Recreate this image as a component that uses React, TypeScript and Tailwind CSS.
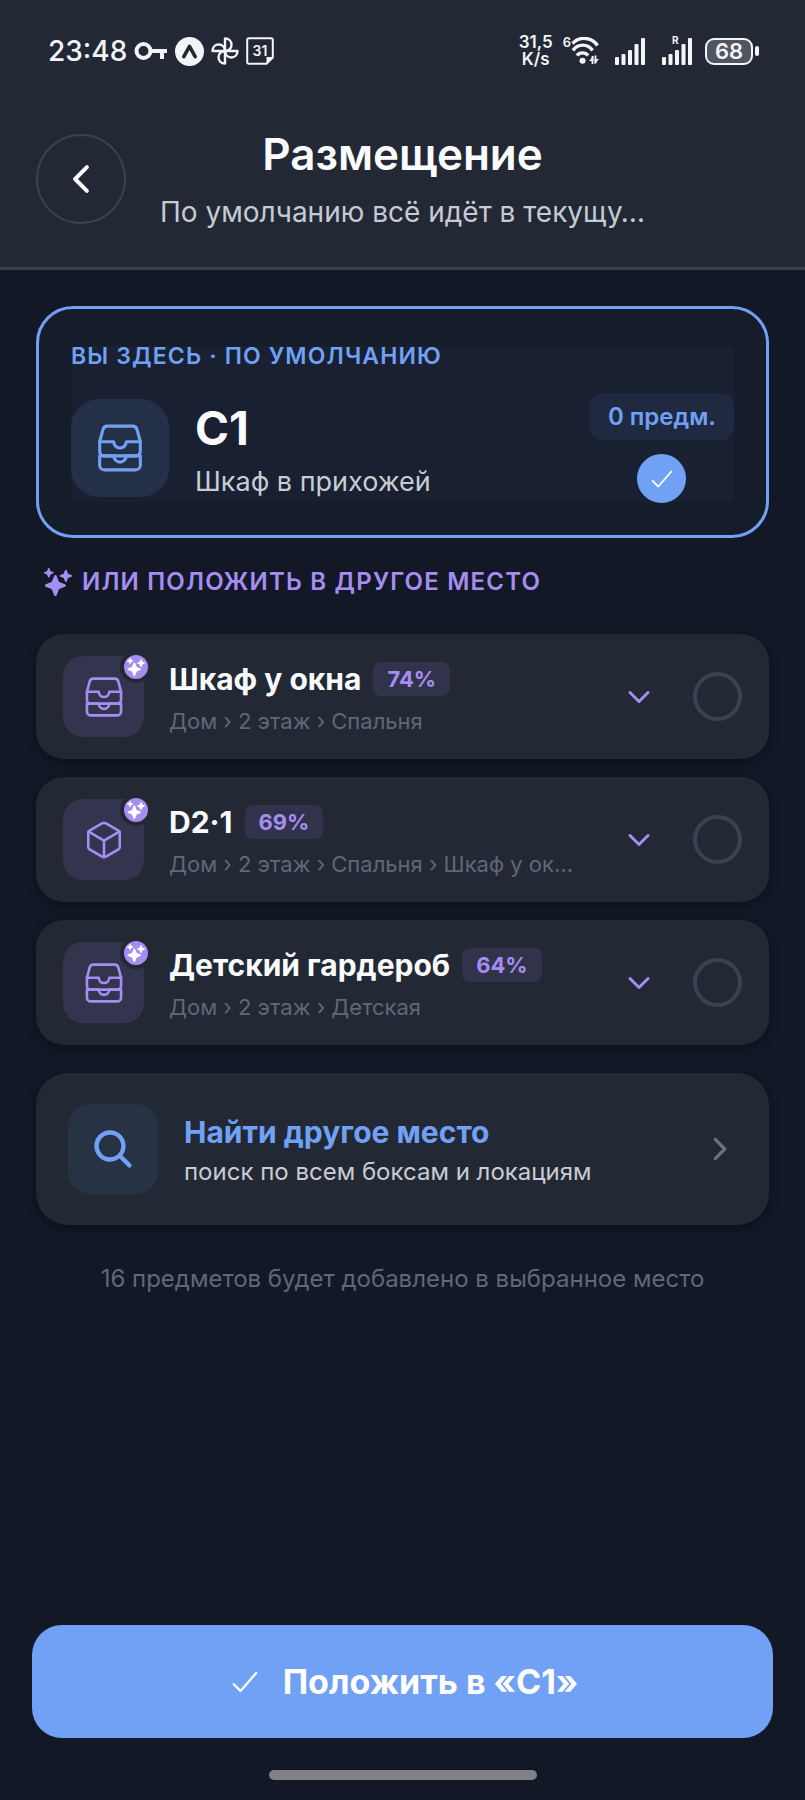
import { useState } from "react";
import type { ComponentType } from "react";
import {
  IoCheckmarkOutline,
  IoChevronBack,
  IoChevronDown,
  IoChevronForward,
  IoCubeOutline,
  IoFileTrayStackedOutline,
  IoSearch,
  IoSparkles,
} from "react-icons/io5";

type Place = {
  id: string;
  name: string;
  path: string;
  match: string;
  icon: ComponentType<{ className?: string }>;
};

const places: Place[] = [
  { id: "window", name: "Шкаф у окна", path: "Дом › 2 этаж › Спальня", match: "74%", icon: IoFileTrayStackedOutline },
  { id: "d2-1", name: "D2·1", path: "Дом › 2 этаж › Спальня › Шкаф у ок…", match: "69%", icon: IoCubeOutline },
  { id: "kids", name: "Детский гардероб", path: "Дом › 2 этаж › Детская", match: "64%", icon: IoFileTrayStackedOutline },
];

const SignalBars = () => (
  <svg viewBox="0 0 31 27" className="w-[31px] h-[27px]" fill="currentColor">
    <rect x="0" y="19" width="4" height="8" rx="1" />
    <rect x="6.5" y="16" width="4" height="11" rx="1" />
    <rect x="13" y="12" width="4" height="15" rx="1" />
    <rect x="19.5" y="6" width="4" height="21" rx="1" />
    <rect x="26" y="0" width="4" height="27" rx="1" />
  </svg>
);

const StatusBar = () => (
  <div className="flex items-center justify-between h-[102px] pl-12 pr-[46px] text-[#f3f4f7]">
    <div className="flex items-center gap-[7px]">
      <span className="text-[28px] leading-9 font-medium">23:48</span>
      <svg viewBox="0 0 34 20" className="w-[34px] h-5" fill="none" stroke="currentColor" strokeWidth="4">
        <circle cx="9.5" cy="10" r="7" />
        <path d="M16 10h17M28 10v8" />
      </svg>
      <svg viewBox="0 0 29 29" className="w-[29px] h-[29px]">
        <circle cx="14.5" cy="14.5" r="14.5" fill="currentColor" />
        <path
          d="M8.8 19.6 14.5 9.4l5.7 10.2"
          fill="none"
          stroke="#222935"
          strokeWidth="3.6"
          strokeLinecap="round"
          strokeLinejoin="round"
        />
      </svg>
      {/* four-blade pinwheel, one blade turned by quarters */}
      <svg viewBox="0 0 28 28" className="w-7 h-7" fill="none" stroke="currentColor" strokeWidth="2.4" strokeLinejoin="round">
        {[0, 90, 180, 270].map((angle) => (
          <path key={angle} d="M14 14V1.5c4 0 6.5 2.8 6.500 6.200S18 14 14 14" transform={`rotate(${angle} 14 14)`} />
        ))}
      </svg>
      <svg viewBox="0 0 28 28" className="w-7 h-7">
        <path
          d="M3 1.2h22a1.8 1.8 0 0 1 1.8 1.8v17.5l-6.3 6.3H3A1.8 1.8 0 0 1 1.2 25V3A1.8 1.8 0 0 1 3 1.2Z"
          fill="none"
          stroke="currentColor"
          strokeWidth="2"
        />
        <path d="M26.8 20h-6.3v6.8Z" fill="currentColor" />
        <text x="14" y="19" textAnchor="middle" fontSize="14" fontWeight="600" fill="currentColor">
          31
        </text>
      </svg>
    </div>

    <div className="flex items-center">
      <div className="flex flex-col items-center text-[17px] leading-[17px] font-semibold">
        <span>31,5</span>
        <span>K/s</span>
      </div>
      <span className="self-start ml-2.5 text-[13px] leading-4 font-semibold">6</span>
      <svg viewBox="0 0 28 28" className="w-7 h-7 mr-4" fill="none" stroke="currentColor" strokeWidth="3.4">
        <path d="M1.5 6.5a16 16 0 0 1 25 2" />
        <path d="M2 13.5a11.5 11.5 0 0 1 19.5 0" />
        <path d="M6 18.5a7 7 0 0 1 11 0" />
        <circle cx="11.5" cy="23.8" r="3" fill="currentColor" stroke="none" />
        <path d="M21.5 19v8M24.5 18.5v8" strokeWidth="1.8" />
        <path d="M22.4 19v5h-4.4ZM23.6 27v-5h4.4Z" fill="currentColor" stroke="none" />
      </svg>
      <SignalBars />
      <div className="relative ml-4 mr-3">
        <span className="absolute left-2.5 -top-1 text-[10px] leading-3 font-bold">R</span>
        <SignalBars />
      </div>
      <div className="flex items-center justify-center w-12 h-[27px] rounded-[9px] border-2 border-current bg-[#50555f] text-[22px] leading-none font-semibold">
        68
      </div>
      <div className="ml-0.5 w-1 h-2.5 rounded-sm bg-current" />
    </div>
  </div>
);

const PlaceRow = ({ place, checked, onSelect }: { place: Place; checked: boolean; onSelect: () => void }) => {
  const Icon = place.icon;

  return (
    <li className="flex items-center h-[125px] px-[27px] rounded-[28px] bg-[#222935] shadow-[0_3px_8px_rgba(8,10,24,0.5)]">
      <div className="relative flex items-center justify-center shrink-0 w-[81px] h-[81px] rounded-[20px] bg-[#33344d] text-[#a68df2]">
        <Icon className="w-[42px] h-[42px]" />
        <span className="absolute -top-[5px] -right-2 flex items-center justify-center w-8 h-8 rounded-full border-4 border-[#222935] bg-[#a68df2] text-white">
          <IoSparkles className="w-[18px] h-[18px]" />
        </span>
      </div>
      <div className="flex-1 min-w-0 ml-[25px] pt-1">
        <div className="flex items-center gap-3">
          <label htmlFor={place.id} className="text-[30px] leading-10 font-bold text-[#fafbfc]">
            {place.name}
          </label>
          <span className="px-3.5 rounded-lg bg-[#31334a] text-[22px] leading-[34px] font-bold text-[#a68df2]">
            {place.match}
          </span>
        </div>
        <p className="mt-1 text-[22px] leading-9 text-[#5f6879] truncate">{place.path}</p>
      </div>
      <button type="button" aria-label={`Подробнее: ${place.name}`} className="shrink-0 p-3 text-[#a68df2]">
        <IoChevronDown className="w-8 h-8" />
      </button>
      <input
        type="radio"
        name="place"
        id={place.id}
        checked={checked}
        onChange={onSelect}
        className="appearance-none shrink-0 ml-[26px] w-[49px] h-[49px] rounded-full border-4 border-[#3b4150] checked:border-[#70a1f4] checked:bg-[#70a1f4]"
      />
    </li>
  );
};

export default function App() {
  const [selected, setSelected] = useState("c1");
  const name = places.find((p) => p.id === selected)?.name ?? "C1";

  return (
    <div className="min-h-screen flex flex-col bg-[#121825] font-['Inter','Noto_Sans',sans-serif]">
      <header className="h-[270px] border-b-3 border-[#383f4d] bg-[#222935]">
        <StatusBar />
        <div className="flex items-center px-9 pt-6">
          <button
            type="button"
            aria-label="Назад"
            className="flex items-center justify-center shrink-0 w-[90px] h-[90px] rounded-full border-2 border-[#3a4150] text-white"
          >
            <IoChevronBack className="w-[42px] h-[42px]" />
          </button>
          <div className="flex-1 min-w-0 mr-[90px] text-center">
            <h1 className="text-[44px] leading-[56px] font-semibold text-[#fafbfc]">Размещение</h1>
            <p className="mt-2.5 text-[28px] leading-10 text-[#c6cad3] truncate">По умолчанию всё идёт в текущу…</p>
          </div>
        </div>
      </header>

      <main className="flex-1 px-9 pt-9">
        <section className="h-[232px] px-8 pt-[37px] rounded-[37px] border-3 border-[#70a1f4] bg-[#151c2a]">
          <div className="h-[156px] bg-[#182031]">
            <h2 className="text-[23px] leading-5 font-semibold tracking-wider text-[#70a1f4]">
              ВЫ ЗДЕСЬ · ПО УМОЛЧАНИЮ
            </h2>
            <div className="flex items-center mt-[27px]">
              <div className="flex items-center justify-center shrink-0 w-[98px] h-[98px] rounded-[28px] bg-[#243047] text-[#70a1f4]">
                <IoFileTrayStackedOutline className="w-[50px] h-[50px]" />
              </div>
              <div className="flex-1 min-w-0 ml-[26px] pt-1">
                <p className="text-[46px] leading-[56px] font-bold text-[#fafbfc]">C1</p>
                <p className="mt-2 text-[27px] leading-9 text-[#c9ccd3] truncate">Шкаф в прихожей</p>
              </div>
              <div className="flex flex-col items-center gap-3.5">
                <span className="px-[18px] rounded-xl bg-[#1f2a40] text-[24px] leading-[47px] font-semibold text-[#70a1f4]">
                  0 предм.
                </span>
                <div className="grid place-items-center text-white">
                  <input
                    type="radio"
                    name="place"
                    id="c1"
                    aria-label="C1"
                    checked={selected === "c1"}
                    onChange={() => setSelected("c1")}
                    className="col-start-1 row-start-1 appearance-none w-[49px] h-[49px] rounded-full border-4 border-[#3b4150] checked:border-[#70a1f4] checked:bg-[#70a1f4]"
                  />
                  {selected === "c1" && (
                    <IoCheckmarkOutline className="col-start-1 row-start-1 w-[30px] h-[30px] pointer-events-none" />
                  )}
                </div>
              </div>
            </div>
          </div>
        </section>

        <h2 className="flex items-center gap-2.5 mt-6 pl-2 text-[24px] leading-10 font-semibold tracking-wider text-[#a68df2]">
          <IoSparkles className="w-7 h-7" />
          ИЛИ ПОЛОЖИТЬ В ДРУГОЕ МЕСТО
        </h2>

        <ul className="flex flex-col gap-[18px] mt-8">
          {places.map((p) => (
            <PlaceRow key={p.id} place={p} checked={selected === p.id} onSelect={() => setSelected(p.id)} />
          ))}
        </ul>

        <button
          type="button"
          className="flex items-center w-full h-[152px] mt-7 px-8 rounded-[32px] bg-[#222935] text-left shadow-[0_3px_8px_rgba(8,10,24,0.5)]"
        >
          <span className="flex items-center justify-center shrink-0 w-[90px] h-[90px] rounded-[22px] bg-[#273244] text-[#70a1f4]">
            <IoSearch className="w-[46px] h-[46px]" />
          </span>
          <span className="flex-1 min-w-0 ml-[26px] pt-1.5">
            <span className="block text-[30px] leading-10 font-bold text-[#70a1f4]">Найти другое место</span>
            <span className="block text-[24px] leading-10 text-[#c9ccd3]">поиск по всем боксам и локациям</span>
          </span>
          <IoChevronForward className="shrink-0 w-[34px] h-[34px] text-[#697182]" />
        </button>

        <p className="mt-[34px] text-center text-[24px] leading-10 text-[#5f6879]">
          16 предметов будет добавлено в выбранное место
        </p>
      </main>

      <footer className="px-8 pb-5">
        <button
          type="button"
          className="flex items-center justify-center gap-5 w-full h-[113px] rounded-[30px] bg-[#70a1f4] text-[34px] font-bold text-white"
        >
          <IoCheckmarkOutline className="w-9 h-9" />
          Положить в «{name}»
        </button>
        <div className="mx-auto mt-8 w-[268px] h-2.5 rounded-full bg-[#808287]" />
      </footer>
    </div>
  );
}
